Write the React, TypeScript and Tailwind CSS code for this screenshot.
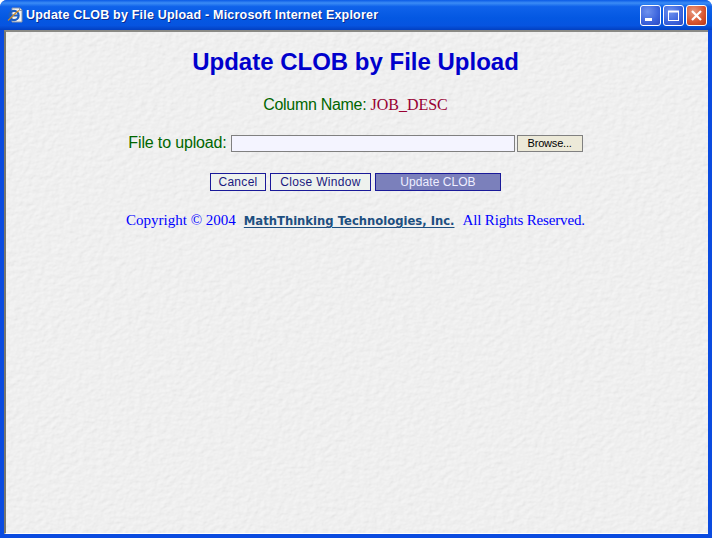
function IeIcon() {
  return (
    <svg width="16" height="16" viewBox="0 0 16 16" className="shrink-0">
      <path d="M5 1h8l2 2v12H5z" fill="#f4f4f0" stroke="#8a94a8" strokeWidth="1" />
      <path d="M12.5 1v2.5H15" fill="#dfe3ea" stroke="#8a94a8" strokeWidth="1" />
      <ellipse cx="7" cy="8.5" rx="4.6" ry="4.6" fill="none" stroke="#1c5fc4" strokeWidth="2.2" />
      <path d="M2.5 8.5h9" stroke="#1c5fc4" strokeWidth="1.8" />
      <path d="M1 13.5C3 12 8 6 12 3.5" fill="none" stroke="#c98a2a" strokeWidth="1.3" />
    </svg>
  )
}

function WinButton({ kind }: { kind: "min" | "max" | "close" }) {
  const bg =
    kind === "close"
      ? "bg-[radial-gradient(circle_at_35%_30%,#e89a80,#d8542e_60%,#b8381a)]"
      : "bg-[radial-gradient(circle_at_35%_30%,#6f92ee,#3b63dc_60%,#2a49c0)]"
  return (
    <div className={`w-[21px] h-[21px] rounded-[3px] border border-white flex items-center justify-center ${bg}`}>
      <svg width="13" height="13" viewBox="0 0 13 13">
        {kind === "min" && <rect x="1" y="9" width="7" height="3" fill="#fff" />}
        {kind === "max" && (
          <g fill="none" stroke="#fff">
            <rect x="1.5" y="2.5" width="10" height="9" />
            <path d="M1 2.5h11" strokeWidth="2" />
          </g>
        )}
        {kind === "close" && <path d="M2 2l9 9M11 2l-9 9" stroke="#fff" strokeWidth="2.2" />}
      </svg>
    </div>
  )
}

function PaperTexture() {
  return (
    <svg className="absolute inset-0 w-full h-full" aria-hidden="true">
      <filter id="paper" x="0" y="0" width="100%" height="100%">
        <feTurbulence type="fractalNoise" baseFrequency="0.16 0.22" numOctaves="3" seed="4" />
        <feDiffuseLighting surfaceScale="0.5" diffuseConstant="1" lightingColor="#f6f6f6">
          <feDistantLight azimuth="225" elevation="70" />
        </feDiffuseLighting>
      </filter>
      <rect width="100%" height="100%" filter="url(#paper)" />
    </svg>
  )
}

const btn = "h-[18px] border border-[#1a1a99] text-[12px] flex items-center justify-center"

export default function App() {
  return (
    <div className="w-[712px] h-[538px] flex flex-col overflow-hidden rounded-t-[7px] bg-[#0a4be0] font-['Liberation_Sans',sans-serif]">
      <div className="h-[30px] shrink-0 flex items-center pl-[7px] pr-[5px] bg-[linear-gradient(180deg,#0a5ae6_0%,#3b8cf5_10%,#0f62ea_22%,#0458e2_60%,#0654e0_85%,#0340c0_100%)]">
        <IeIcon />
        <span className="ml-[3px] text-white text-[12.5px] font-bold tracking-[0.2px] [text-shadow:1px_1px_0_#0a2a90]">
          Update CLOB by File Upload - Microsoft Internet Explorer
        </span>
        <div className="ml-auto flex gap-[2px]">
          <WinButton kind="min" />
          <WinButton kind="max" />
          <WinButton kind="close" />
        </div>
      </div>

      <div className="flex-1 mx-[4px] mb-[4px] border-t-2 border-l-2 border-b border-t-[#8a8a86] border-l-[#77776f] border-b-white relative flex flex-col items-center">
        <PaperTexture />
        <div className="relative flex flex-col items-center w-full pr-[3px]">
          <h1 className="mt-[16px] text-[24px] leading-[28px] font-bold text-[#0000cc]">Update CLOB by File Upload</h1>

          <p className="mt-[19px] text-[16px] leading-[20px] tracking-[-0.3px] text-[#006600]">
            Column Name: <span className="font-['Liberation_Serif',serif] tracking-normal text-[#990033]">JOB_DESC</span>
          </p>

          <div className="mt-[16px] flex items-center text-[#006600] text-[16px]">
            <span className="mb-[1px] tracking-[-0.15px]">File to upload:</span>
            <div className="ml-[4px] w-[284px] h-[17px] -mt-[1px] border border-[#808080] bg-[#f4f4ff]" />
            <div className="ml-[2px] w-[66px] h-[17px] -mt-[1px] border border-[#808080] bg-[#ece9d8] text-black text-[11px] tracking-[-0.2px] flex items-center justify-center">
              Browse...
            </div>
          </div>

          <div className="mt-[17px] flex gap-[4px]">
            <div className={`${btn} w-[56px] tracking-[0.3px] bg-[#eef2ee] text-[#1a1a80]`}>Cancel</div>
            <div className={`${btn} w-[101px] tracking-[0.3px] bg-[#eef2ee] text-[#1a1a80]`}>Close Window</div>
            <div className={`${btn} w-[126px] tracking-[0.05px] bg-[#7b80bb] text-[#eeeeff]`}>Update CLOB</div>
          </div>

          <p className="mt-[19px] flex items-baseline font-['Liberation_Serif',serif] text-[15px] leading-[20px] text-[#0000ff]">
            <span>Copyright © 2004</span>
            <a className="ml-[8px] font-['DejaVu_Sans',sans-serif] text-[11.6px] font-bold text-[#1d4f80] underline underline-offset-2">
              MathThinking Technologies, Inc.
            </a>
            <span className="ml-[8px] tracking-[-0.15px]">All Rights Reserved.</span>
          </p>
        </div>
      </div>
    </div>
  )
}
